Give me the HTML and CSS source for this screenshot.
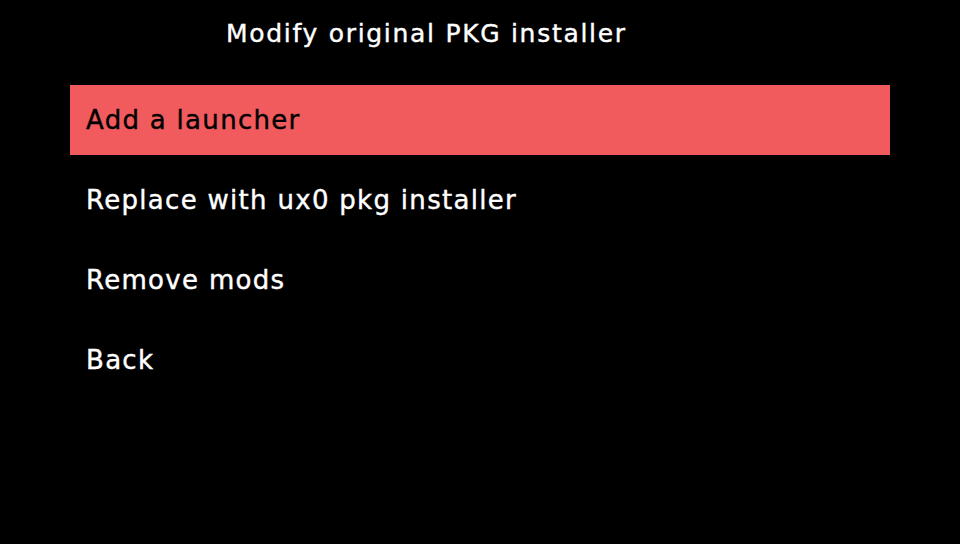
FILE: index.html
```html
<!DOCTYPE html>
<html>
<head>
<meta charset="utf-8">
<link rel="stylesheet" href="styles.css">
</head>
<body>
<div class="screen">
  <h1 class="title"><span class="title-text">Modify original PKG installer</span></h1>
  <ul class="menu">
    <li class="item selected"><span class="label">Add a launcher</span></li>
    <li class="item"><span class="label">Replace with ux0 pkg installer</span></li>
    <li class="item"><span class="label">Remove mods</span></li>
    <li class="item"><span class="label">Back</span></li>
  </ul>
</div>
</body>
</html>
```
FILE: styles.css
```css
html, body {
  margin: 0;
  padding: 0;
  background: #000;
}
.screen {
  width: 960px;
  height: 544px;
  background: #000;
  color: #fff;
  font-family: "DejaVu Sans", sans-serif;
  overflow: hidden;
}
.title {
  margin: 0;
  height: 85px;
  padding-left: 226px;
  box-sizing: border-box;
  padding-top: 17px;
  font-size: 25px;
  font-weight: normal;
  line-height: 34px;
  letter-spacing: 1.7px;
  -webkit-text-stroke: 0.4px #fff;
}
.menu {
  list-style: none;
  margin: 0;
  padding: 0 70px;
  display: flex;
  flex-direction: column;
  gap: 10px;
}
.item {
  height: 70px;
  display: flex;
  align-items: center;
  padding-left: 16px;
  font-size: 26px;
  letter-spacing: 1.3px;
  -webkit-text-stroke: 0.4px #fff;
}
.item.selected {
  background: #f25b5e;
  color: #000;
  -webkit-text-stroke: 0.4px #000;
}
```
